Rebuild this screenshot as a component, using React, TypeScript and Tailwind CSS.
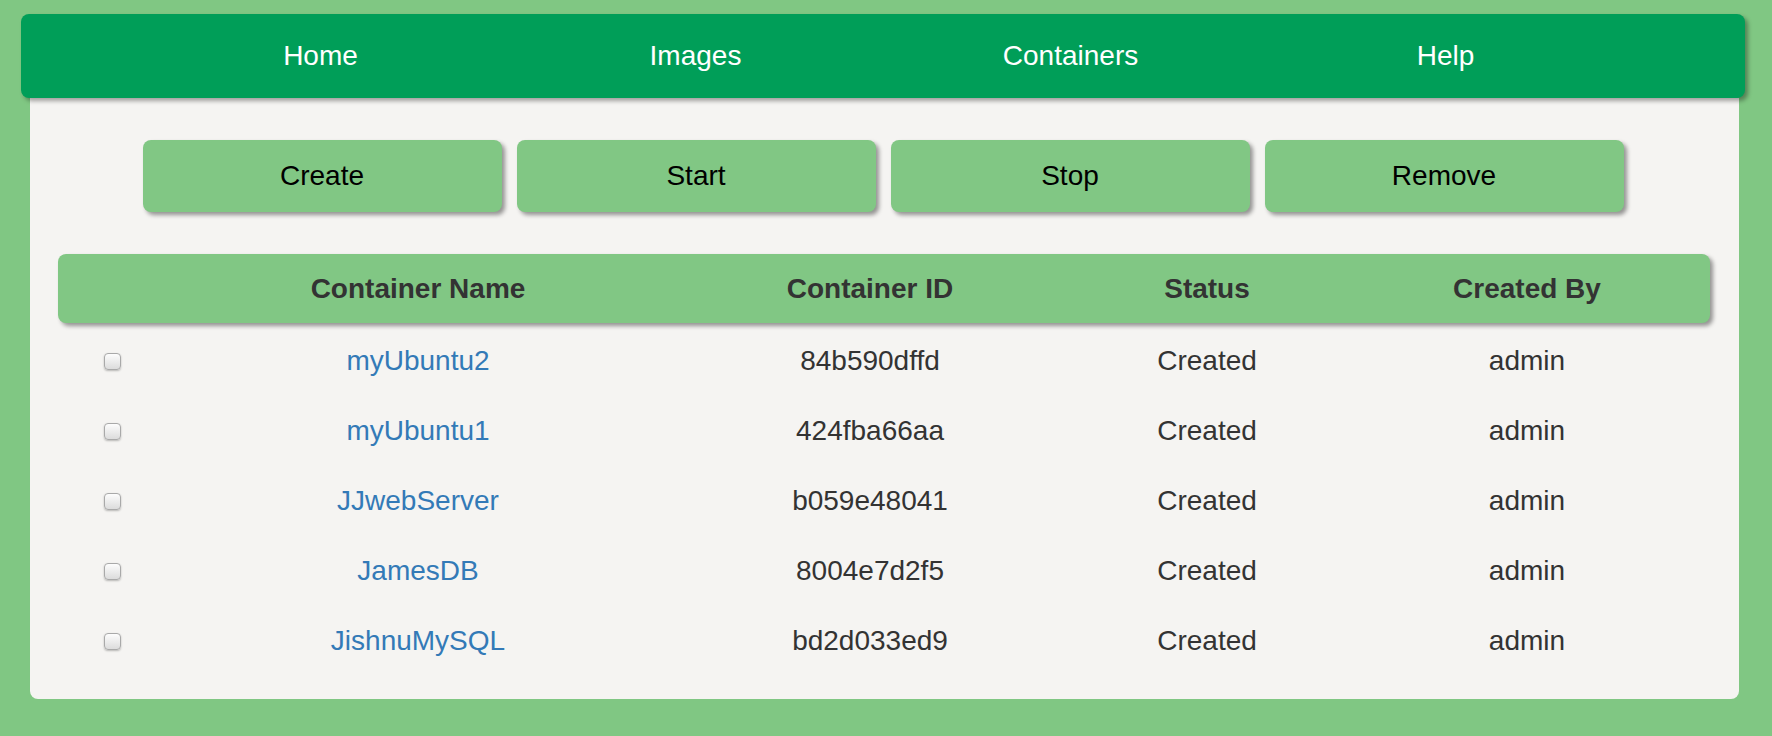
import React from 'react';

const navItems = ['Home', 'Images', 'Containers', 'Help'];
const actions = ['Create', 'Start', 'Stop', 'Remove'];

const containers = [
  { name: 'myUbuntu2', id: '84b590dffd', status: 'Created', owner: 'admin' },
  { name: 'myUbuntu1', id: '424fba66aa', status: 'Created', owner: 'admin' },
  { name: 'JJwebServer', id: 'b059e48041', status: 'Created', owner: 'admin' },
  { name: 'JamesDB', id: '8004e7d2f5', status: 'Created', owner: 'admin' },
  { name: 'JishnuMySQL', id: 'bd2d033ed9', status: 'Created', owner: 'admin' },
];

const cols = 'grid grid-cols-[108px_504px_400px_274px_1fr] items-center text-center';

const App: React.FC = () => {
  return (
    <div className="min-h-screen bg-[#80c783] pt-[14px] font-['Liberation_Sans',Helvetica,Arial,sans-serif]">
      {/* Top navigation */}
      <nav className="relative z-10 ml-[21px] w-[1724px] h-[84px] bg-[#009e58] rounded-[8px] shadow-[3px_3px_4px_rgba(0,0,0,0.35)] flex justify-center gap-[15px]">
        {navItems.map((item) => (
          <a
            key={item}
            href="#"
            className="w-[360px] flex items-center justify-center text-white text-[28px]"
          >
            {item}
          </a>
        ))}
      </nav>

      {/* Content panel */}
      <div className="ml-[30px] w-[1709px] bg-[#f5f4f2] rounded-b-[8px] pt-[42px] pb-[23px]">
        <div className="flex justify-center gap-[15px] pr-[3px]">
          {actions.map((action) => (
            <button
              key={action}
              className="w-[359px] h-[72px] rounded-[8px] bg-[#81c784] text-black text-[28px] shadow-[3px_3px_4px_rgba(0,0,0,0.4)]"
            >
              {action}
            </button>
          ))}
        </div>

        <div className="mt-[42px] ml-[28px] w-[1652px]">
          <div className={`${cols} h-[69px] rounded-[8px] bg-[#81c784] text-[#333] text-[28px] font-bold shadow-[3px_3px_4px_rgba(0,0,0,0.4)]`}>
            <div></div>
            <div>Container Name</div>
            <div>Container ID</div>
            <div>Status</div>
            <div>Created By</div>
          </div>

          <div className="pt-[3px]">
            {containers.map((c) => (
              <div key={c.id} className={`${cols} h-[70px] text-[28px] text-[#333]`}>
                <div className="flex justify-center">
                  <input
                    type="checkbox"
                    className="appearance-none w-[17px] h-[17px] rounded-[4px] border border-[#a9a9a9] bg-gradient-to-b from-[#fdfdfd] to-[#dcdcdc] shadow-[0_1px_2px_rgba(0,0,0,0.25)]"
                  />
                </div>
                <div>
                  <a href="#" className="text-[#337ab7]">
                    {c.name}
                  </a>
                </div>
                <div>{c.id}</div>
                <div>{c.status}</div>
                <div>{c.owner}</div>
              </div>
            ))}
          </div>
        </div>
      </div>
    </div>
  );
};

export default App;
